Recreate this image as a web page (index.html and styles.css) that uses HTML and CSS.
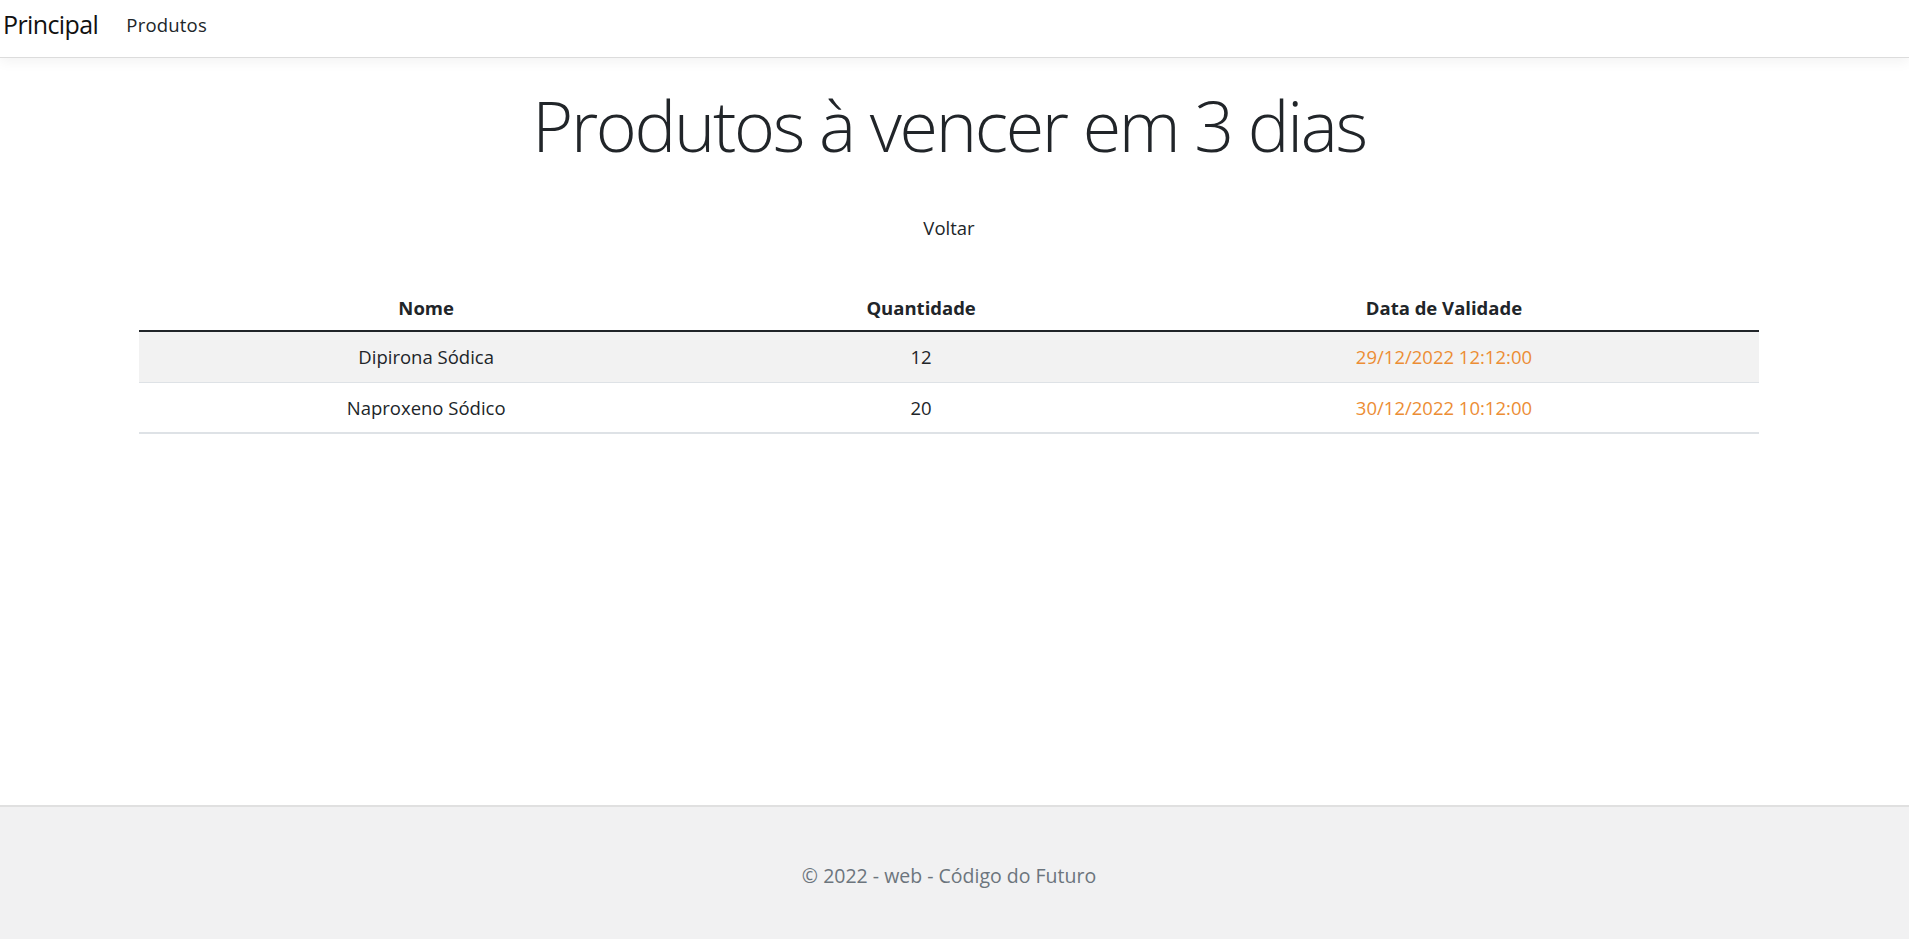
FILE: index.html
```html
<!DOCTYPE html>
<html lang="pt-br">
<head>
<meta charset="utf-8">
<title>Produtos à vencer</title>
<link rel="stylesheet" href="styles.css">
</head>
<body>
<header class="navbar">
  <a class="brand" href="#">Principal</a>
  <a class="nav-link" href="#">Produtos</a>
</header>
<main class="content">
  <h1 class="title">Produtos à vencer em 3 dias</h1>
  <div class="back"><a href="#">Voltar</a></div>
  <table class="table">
    <thead>
      <tr><th>Nome</th><th>Quantidade</th><th>Data de Validade</th></tr>
    </thead>
    <tbody>
      <tr class="striped"><td>Dipirona Sódica</td><td>12</td><td class="date">29/12/2022 12:12:00</td></tr>
      <tr><td>Naproxeno Sódico</td><td>20</td><td class="date">30/12/2022 10:12:00</td></tr>
    </tbody>
  </table>
</main>
<footer class="footer">© 2022 - web - Código do Futuro</footer>
</body>
</html>
```

FILE: styles.css
```css
* { box-sizing: border-box; }
html, body { margin: 0; padding: 0; }
body {
  font-family: "Open Sans", "Noto Sans", sans-serif;
  color: #212529;
  background: #fff;
  min-height: 100vh;
  display: flex;
  flex-direction: column;
  font-size: 20px;
}
a { color: inherit; text-decoration: none; }

.navbar {
  height: 58px;
  display: flex;
  align-items: center;
  gap: 28px;
  padding: 0 0 9px 3px;
  border-bottom: 1px solid #dcdcdc;
  box-shadow: 0 4px 12px rgba(0,0,0,0.05);
}
.brand { font-size: 25px; color: #111; letter-spacing: -0.6px; }
.nav-link { font-size: 18.5px; color: #212529; letter-spacing: 0.2px; }

.content {
  padding: 0 150px 0 139px;
}
.title {
  margin: 25px 0 0;
  font-size: 70px;
  font-weight: 300;
  line-height: 84px;
  text-align: center;
  letter-spacing: -2.3px;
}
.back {
  margin-top: 46px;
  text-align: center;
  font-size: 18.5px;
  line-height: 30px;
}
.table {
  width: 100%;
  margin-top: 37px;
  border-collapse: collapse;
  font-size: 18.5px;
}
.table th, .table td {
  text-align: center;
  height: 51px;
  padding: 0 10px;
  border-bottom: 1px solid #dee2e6;
}
.table th {
  font-weight: 700;
  height: 51px;
  padding-top: 4px;
  border-bottom: 2px solid #212529;
}
.table tbody tr:last-child td { border-bottom: 2px solid #dee2e6; }
.striped td { background: #f2f2f2; }
.date { color: #ec8d34; }

.footer {
  margin-top: auto;
  height: 134px;
  background: #f1f1f2;
  border-top: 2px solid #e0e0e0;
  color: #6c757d;
  display: flex;
  align-items: center;
  justify-content: center;
  font-size: 19.5px;
  padding: 4px 150px 0 139px;
}
```
